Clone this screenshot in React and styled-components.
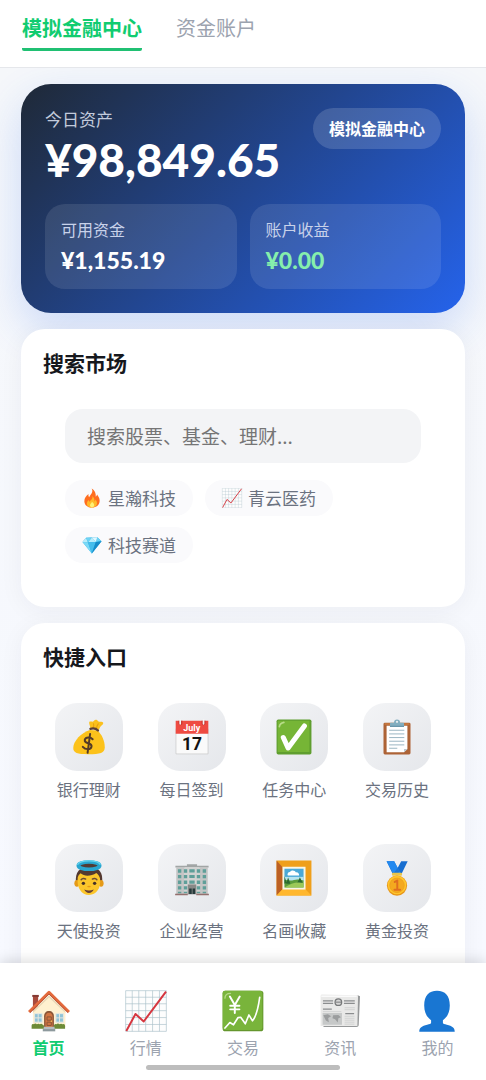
import React, { useState } from 'react';
import styled, { createGlobalStyle, css } from 'styled-components';

const GlobalStyle = createGlobalStyle`
    * {
        box-sizing: border-box;
    }

    body {
        margin: 0;
        background: #f6f8fd;
        font-family: 'Noto Sans CJK SC', 'Noto Sans', sans-serif;
        color: #16181d;
    }

    button, input {
        font-family: inherit;
    }
`;

/* ---------- icons ---------- */

const Fire = () => (
    <svg viewBox="0 0 128 128" aria-hidden="true">
        <path fill="#ff6d1f" d="M62 3c9 17 3 29-8 41-4 5-7 10-8 15-5-5-6-12-4-20C25 50 15 67 15 84c0 24 20 41 48 41 30 0 50-18 50-44 0-16-9-27-16-39-2 7-5 11-9 14C90 34 82 14 62 3z" />
        <path fill="#ffb928" d="M66 51c4 13-3 21-10 27-4 4-6 7-7 10-4-3-6-7-6-11-8 7-12 15-12 23 0 14 13 24 32 24 20 0 33-11 33-27 0-9-4-17-10-24 0 6-2 10-6 13 1-14-3-26-14-35z" />
        <path fill="#fff176" d="M63 88c2 8-12 12-12 22 0 8 6 13 13 13 8 0 14-5 14-13 0-9-7-16-15-22z" />
    </svg>
);

const Chart = () => (
    <svg viewBox="0 0 128 128" aria-hidden="true">
        <rect x="2" y="2" width="124" height="124" fill="#fdfdfd" />
        <path stroke="#a9c0c9" strokeWidth="2" fill="none" d="M2 2h124v124H2zM22 2v124M42 2v124M63 2v124M84 2v124M105 2v124M2 22h124M2 42h124M2 63h124M2 84h124M2 105h124" />
        <path fill="none" stroke="#d6363f" strokeWidth="6" strokeLinejoin="round" d="M4 125 32 73l25 23L125 5" />
    </svg>
);

const Gem = () => (
    <svg viewBox="0 0 128 128" aria-hidden="true">
        <path fill="#29a9e0" d="M3 45 26 18l72-4 27 26-62 78z" />
        <path fill="#b8edfb" d="m3 45 23-27 12 29zM63 16 38 47l50-3z" />
        <path fill="#6cd3f4" d="m26 18 37-2-25 31zM98 14l27 26-37 4z" />
        <path fill="#dff8ff" d="m63 16 35-2-10 30z" />
        <path fill="#7cdaf7" d="m3 45 35 2 25 71z" />
        <path fill="#45bdec" d="m38 47 50-3-25 74z" />
        <path fill="#168bc8" d="m88 44 37-4-62 78z" />
    </svg>
);

const MoneyBag = () => (
    <svg viewBox="0 0 128 128" aria-hidden="true">
        <path fill="#fcc21b" d="M67 39C37 48 8 78 8 103c0 17 14 22 53 22 43 0 59-5 59-25 0-22-10-45-26-59z" />
        <path fill="#fbc01d" d="M69 33c-1-10-6-16-4-23 8-3 12 2 16-3 5-7 12-5 16 1 5 5 12-2 17 4 3 8-8 10-11 18-2 4-4 7-5 11z" />
        <path fill="none" stroke="#e7a00f" strokeWidth="4" strokeLinecap="round" d="M80 17c3 6 0 12-3 17M97 17c-5 5-6 12-6 18" />
        <path fill="none" stroke="#5d4037" strokeWidth="8" strokeLinecap="round" d="M69 35c9-3 21 0 27 6" />
        <g fill="none" stroke="#543b27" strokeWidth="7" strokeLinecap="round">
            <path d="M77 72c-7-8-25-9-28 2-3 17 27 8 24 24-2 12-22 12-31 1" />
            <path d="m68 53-9 67" />
        </g>
    </svg>
);

const Calendar = () => (
    <svg viewBox="0 0 128 128" aria-hidden="true">
        <path fill="#fafafa" stroke="#bdbdbd" strokeWidth="2" d="M7 35h114v89H7z" />
        <path fill="#ee4b42" d="M6 6h116v46H6z" />
        <path fill="#c9352d" d="M16 6h14v9a7 7 0 0 1-14 0zM98 6h14v9a7 7 0 0 1-14 0z" />
        <path stroke="#f5f5f5" strokeWidth="6" strokeLinecap="round" d="M22 3v14M105 3v14" />
        <text x="63" y="41" textAnchor="middle" fontFamily="Roboto" fontWeight="700" fontSize="32" fill="#fff">July</text>
        <text x="64" y="111" textAnchor="middle" fontFamily="Roboto" fontWeight="700" fontSize="62" fill="#111">17</text>
    </svg>
);

const Check = () => (
    <svg viewBox="0 0 128 128" aria-hidden="true">
        <rect x="2" y="2" width="124" height="124" rx="6" fill="#5f9e2f" />
        <path fill="#76b536" d="M6 6h113v111H6z" />
        <path stroke="#b8dc89" strokeWidth="6" strokeLinecap="round" d="M12 27c1-8 6-13 16-15" fill="none" />
        <path fill="none" stroke="#fff" strokeWidth="18" strokeLinecap="round" strokeLinejoin="round" d="m26 66 17 37L101 25" />
    </svg>
);

const Clipboard = () => (
    <svg viewBox="0 0 128 128" aria-hidden="true">
        <rect x="16" y="13" width="96" height="113" rx="5" fill="#ad6336" />
        <path fill="#c8793f" d="M20 15h88v6H20z" />
        <path fill="#fff" d="M27 24h74v83l-12 11H27z" />
        <path fill="#b9c5cc" d="m101 107-12 11v-11z" />
        <path stroke="#8aa8b8" strokeWidth="3" d="M36 40h54M36 53h54M36 66h54M36 79h54M36 92h54M36 104h29" />
        <path fill="#82aebf" d="M39 28V17c0-3 2-4 5-4h9c1-7 4-11 11-11s11 4 11 11h9c3 0 5 1 5 4v11z" />
        <circle cx="64" cy="10" r="4" fill="#e8edf0" />
        <path stroke="#5c8ba0" strokeWidth="3" d="M39 26h50" />
    </svg>
);

const Angel = () => (
    <svg viewBox="0 0 128 128" aria-hidden="true">
        <path fill="#543930" d="M18 80C13 44 31 23 64 23s52 21 46 57z" />
        <ellipse cx="21" cy="83" rx="9" ry="12" fill="#e59a18" />
        <ellipse cx="107" cy="83" rx="9" ry="12" fill="#e59a18" />
        <path fill="#fcc62b" d="M24 61c2-5 5-10 10-14 15 13 38 10 56-1 6 5 11 11 13 19 5 36-13 59-39 59S19 99 24 61z" />
        <path fill="none" stroke="#6d4c36" strokeWidth="5" strokeLinecap="round" d="M36 70c4-5 11-6 16-2M76 68c5-4 12-3 16 2" />
        <circle cx="44" cy="83" r="6" fill="#463129" />
        <circle cx="84" cy="83" r="6" fill="#463129" />
        <path fill="#e59a18" d="M57 94q7-5 14 0-7 6-14 0z" />
        <path fill="#684034" d="M47 105q17 7 34 0-6 12-17 12t-17-12z" />
        <ellipse cx="64" cy="20" rx="38" ry="13" fill="#513b35" stroke="#29a6d0" strokeWidth="13" />
        <path fill="none" stroke="#64d3ed" strokeWidth="5" d="M23 17c5-11 23-14 41-14s35 4 41 13" />
    </svg>
);

const Office = () => (
    <svg viewBox="0 0 128 128" aria-hidden="true">
        <path fill="#a1a5a5" d="M46 15h36v9H46zM5 20h118v7H5z" />
        <path fill="#c4c5c5" d="M8 25h30v96H8zM90 25h30v96H90z" />
        <path fill="#d2d2d1" d="M38 25h52v96H38z" />
        <path stroke="#5f9f99" strokeWidth="12" strokeDasharray="12 8" d="M20 33v85M41 33v85M87 33v85M108 33v85" />
        <path stroke="#5f9f99" strokeWidth="19" strokeDasharray="11 9" d="M64 33v51" />
        <path fill="#888987" d="M49 87h30v35H49z" />
        <path fill="#263b3c" d="M54 101h9v20h-9zM66 101h9v20h-9z" />
        <path fill="#94706e" d="M4 120h45v5H4zM79 120h45v5H79z" />
    </svg>
);

const Painting = () => (
    <svg viewBox="0 0 128 128" aria-hidden="true">
        <path fill="#ef9f1b" d="M2 2h124v124H2z" />
        <path fill="#bc6024" d="m2 2 22 25v76L2 126z" />
        <path fill="#ffb72e" d="m2 126 22-23h80l22 23z" />
        <path fill="#f8f6e7" d="M23 24h82v81H23z" />
        <path fill="#4ba9d8" d="M30 31h68v44H30z" />
        <path fill="#b5e3f0" d="M30 60h68v20H30z" />
        <path fill="#5a9c3b" d="M30 70q20 5 34 1t34 2v25H30z" />
        <path fill="#2c6930" d="m30 58 8 23-8 3zM43 62l8 22H36zM85 61l10 22H75z" />
        <path fill="#fff" d="M42 55a8 8 0 0 1 7-12c5-9 19-7 22 1 7-1 12 4 11 11z" />
        <path fill="#9bc958" d="M30 98q35-25 68-16v16z" />
    </svg>
);

const Medal = () => (
    <svg viewBox="0 0 128 128" aria-hidden="true">
        <path fill="#176ed0" d="M27 4h27l12 24L79 4h23L80 50H49z" />
        <path fill="#2389ef" d="M27 4h27l24 45H50z" />
        <path fill="#1557ae" d="m66 28 7 13-8 9H50z" opacity=".4" />
        <rect x="46" y="45" width="36" height="11" rx="4" fill="#eac54a" />
        <circle cx="64" cy="91" r="36" fill="#e79619" />
        <circle cx="64" cy="89" r="33" fill="#ffc52c" />
        <circle cx="64" cy="90" r="26" fill="#f4a91f" stroke="#e8971c" strokeWidth="2" />
        <path fill="none" stroke="#df6f20" strokeWidth="7" strokeLinecap="round" strokeLinejoin="round" d="m56 78 9-5v32M55 106h20" />
    </svg>
);

const House = () => (
    <svg viewBox="0 0 128 128" aria-hidden="true">
        <path fill="#a74a3c" d="M15 18h16v46H15z" />
        <path fill="#853a33" d="M13 15h20v6H13z" />
        <path fill="#fff1d0" d="m64 18 50 48v47H15V65z" />
        <path fill="#ead9b8" d="M64 23 15 70v-7l49-48 50 48v7z" />
        <path fill="none" stroke="#e46b3d" strokeWidth="9" strokeLinejoin="round" d="M3 67 64 7l61 60" />
        <path fill="none" stroke="#b84f34" strokeWidth="3" d="m6 69 58-57 58 57" />
        <path fill="#8b5637" d="M49 114V80c0-10 6-16 15-16s15 6 15 16v34z" />
        <path fill="#d17542" d="M53 114V82c0-8 4-13 11-13s11 5 11 13v32z" />
        <path fill="none" stroke="#8b5637" strokeWidth="3" d="M58 82h13v10H58zM58 98h13v10H58z" />
        <circle cx="71" cy="95" r="2" fill="#ffda65" />
        <path fill="#8fc3d6" stroke="#e7e8e1" strokeWidth="3" d="M20 72h23v26H20zM85 72h23v26H85z" />
        <path stroke="#e7e8e1" strokeWidth="3" d="M31 72v26M20 85h23M96 72v26M85 85h23" />
        <path fill="#6d8b37" d="M11 108q0-5 7-4 4-4 9 0 5-3 9 0 5-3 8 1 5 1 5 6v7H11zM79 108q2-5 8-4 4-4 9 0 5-3 9 0 8-2 8 5v9H79z" />
        <path fill="#b8bec0" d="M48 112h33v7H48z" />
        <path fill="#8d999d" d="M45 119h38v7H45z" />
    </svg>
);

const YenChart = () => (
    <svg viewBox="0 0 128 128" aria-hidden="true">
        <rect x="2" y="2" width="124" height="124" rx="8" fill="#64962d" />
        <rect x="2" y="2" width="121" height="120" rx="7" fill="#79b43b" />
        <path stroke="#b5d987" strokeWidth="4" strokeLinecap="round" fill="none" d="M9 25c0-10 7-15 17-15" />
        <g fill="none" stroke="#fff" strokeLinecap="round" strokeLinejoin="round">
            <path strokeWidth="6" d="m24 20 15 26 15-26M39 46v24M25 48h28M25 59h28" />
            <path strokeWidth="5" d="m9 116 15-17 11 7 14-22 8-1 14 20 11-27 11 18C107 77 111 52 115 22" />
        </g>
    </svg>
);

const Newspaper = () => (
    <svg viewBox="0 0 128 128" aria-hidden="true">
        <path fill="#969899" d="m118 16 7 3-4 88c0 4-3 6-7 6H12z" />
        <path fill="#e9e9e8" d="M5 18q0-4 4-4l110 2-2 94H5z" />
        <path stroke="#fafafa" strokeWidth="4" d="M7 19h108" />
        <path stroke="#8b8d8e" strokeWidth="4" d="M12 33h31M76 33h33M12 41h31M76 41h33" />
        <circle cx="59" cy="37" r="10" fill="#d6d6d5" stroke="#77797a" strokeWidth="4" />
        <path stroke="#77797a" strokeWidth="3" d="M51 37h17" />
        <path stroke="#8b8d8e" strokeWidth="4" d="M12 58h27M80 72h27" />
        <path stroke="#c4c6c6" strokeWidth="2" d="M12 66h56M12 72h56M78 54h31M78 60h31M78 80h30M78 86h30M78 92h30M78 98h30M78 104h30" />
        <path fill="#c6c8c8" d="M11 70h59v36H11z" />
        <path fill="#9b9d9e" d="m13 77 14-3 10 6-9 5 2 13-9-5zM43 77l16-1 8 7-8 3-2 13-8-10-8-3z" />
    </svg>
);

const Person = () => (
    <svg viewBox="0 0 128 128" aria-hidden="true">
        <path fill="#1976d2" d="M64 2c25 0 39 15 39 45 0 22-9 37-21 45v8c0 4 5 4 12 6 16 4 24 9 24 21H10c0-12 8-17 24-21 7-2 12-2 12-6v-8C34 84 25 69 25 47 25 17 39 2 64 2z" />
    </svg>
);

/* ---------- data ---------- */

const tabs = ['模拟金融中心', '资金账户'];

const hotTags = [
    { icon: Fire, label: '星瀚科技' },
    { icon: Chart, label: '青云医药' },
    { icon: Gem, label: '科技赛道' },
];

const shortcuts = [
    { icon: MoneyBag, label: '银行理财' },
    { icon: Calendar, label: '每日签到' },
    { icon: Check, label: '任务中心' },
    { icon: Clipboard, label: '交易历史' },
    { icon: Angel, label: '天使投资' },
    { icon: Office, label: '企业经营' },
    { icon: Painting, label: '名画收藏' },
    { icon: Medal, label: '黄金投资' },
];

const navItems = [
    { icon: House, label: '首页' },
    { icon: Chart, label: '行情' },
    { icon: YenChart, label: '交易' },
    { icon: Newspaper, label: '资讯' },
    { icon: Person, label: '我的' },
];

const App = () => {

    const [tab, setTab] = useState(0);
    const [page, setPage] = useState(0);
    const [keyword, setKeyword] = useState('');

    return (
        <>
            <GlobalStyle />
            <Screen>
                <Header>
                    {tabs.map((label, index) => (
                        <Tab key={label} $active={index === tab} onClick={() => setTab(index)}>
                            {label}
                        </Tab>
                    ))}
                </Header>

                <Content>
                    <AssetCard>
                        <AssetTop>
                            <div>
                                <AssetLabel>今日资产</AssetLabel>
                                <AssetAmount>¥98,849.65</AssetAmount>
                            </div>
                            <CenterButton>模拟金融中心</CenterButton>
                        </AssetTop>
                        <Stats>
                            <Stat>
                                <StatLabel>可用资金</StatLabel>
                                <StatValue>¥1,155.19</StatValue>
                            </Stat>
                            <Stat>
                                <StatLabel>账户收益</StatLabel>
                                <StatValue $gain>¥0.00</StatValue>
                            </Stat>
                        </Stats>
                    </AssetCard>

                    <Panel>
                        <PanelTitle>搜索市场</PanelTitle>
                        <SearchArea>
                            <SearchInput
                                type='text'
                                aria-label='搜索市场'
                                placeholder='搜索股票、基金、理财...'
                                value={keyword}
                                onChange={e => setKeyword(e.target.value)}
                            />
                            <Tags>
                                {hotTags.map(({ icon: Icon, label }) => (
                                    <Tag key={label} onClick={() => setKeyword(label)}>
                                        <Icon />
                                        {label}
                                    </Tag>
                                ))}
                            </Tags>
                        </SearchArea>
                    </Panel>

                    <Panel>
                        <PanelTitle>快捷入口</PanelTitle>
                        <Shortcuts>
                            {shortcuts.map(({ icon: Icon, label }) => (
                                <Shortcut key={label}>
                                    <ShortcutIcon><Icon /></ShortcutIcon>
                                    {label}
                                </Shortcut>
                            ))}
                        </Shortcuts>
                    </Panel>
                </Content>

                <BottomNav>
                    {navItems.map(({ icon: Icon, label }, index) => (
                        <NavItem
                            key={label}
                            href='#'
                            $active={index === page}
                            onClick={e => { e.preventDefault(); setPage(index) }}
                        >
                            <Icon />
                            {label}
                        </NavItem>
                    ))}
                    <HomeIndicator />
                </BottomNav>
            </Screen>
        </>
    )
}

const plainButton = css`
    border: 0;
    padding: 0;
    background: none;
    cursor: pointer;
`

const Screen = styled.div`
    display: flex;
    flex-direction: column;
    height: 100vh;
    overflow: hidden;
`

const Header = styled.header`
    flex: none;
    display: flex;
    align-items: flex-start;
    gap: 34px;
    padding: 12px 22px 16px;
    background: #fff;
    border-bottom: 1px solid #e5e7eb;
`

const Tab = styled.button`
    ${plainButton}
    padding-bottom: 4px;
    border-bottom: 3px solid ${({ $active }) => ($active ? '#20c073' : 'transparent')};
    border-radius: 2px;
    font-size: 20px;
    line-height: 32px;
    font-weight: ${({ $active }) => ($active ? 700 : 400)};
    color: ${({ $active }) => ($active ? '#10cc70' : '#9ca3af')};
`

const Content = styled.main`
    flex: 1;
    min-height: 0;
    display: flex;
    flex-direction: column;
    gap: 16px;
    padding: 16px 21px;
    overflow-y: auto;
    scrollbar-width: none;
    background: linear-gradient(180deg, #f5f7fa 0%, #f7f9ff 100%);

    > * {
        flex: none;
    }
`

const AssetCard = styled.section`
    padding: 24px;
    border-radius: 30px;
    background: linear-gradient(135deg, #1f2937 0%, #2563eb 100%);
    box-shadow: 0 16px 44px rgba(37, 99, 235, 0.2);
    color: #fff;
`

const AssetTop = styled.div`
    display: flex;
    justify-content: space-between;
    align-items: flex-start;
`

const AssetLabel = styled.div`
    font-size: 17px;
    line-height: 22px;
    color: #c3cbdc;
`

const AssetAmount = styled.div`
    font-family: Lato, 'Noto Sans', sans-serif;
    font-size: 46px;
    line-height: 60px;
    font-weight: 900;
`

const CenterButton = styled.button`
    ${plainButton}
    padding: 8px 16px;
    border-radius: 21px;
    background: rgba(255, 255, 255, 0.15);
    font-size: 16px;
    line-height: 25px;
    font-weight: 700;
    color: #fff;
`

const Stats = styled.div`
    display: grid;
    grid-template-columns: 1fr 1fr;
    gap: 13px;
    margin-top: 14px;
`

const Stat = styled.div`
    padding: 14px 16px 12px;
    border-radius: 20px;
    background: rgba(255, 255, 255, 0.1);
`

const StatLabel = styled.div`
    font-size: 16px;
    line-height: 22px;
    color: #c8d2ea;
`

const StatValue = styled.div`
    margin-top: 4px;
    font-family: Lato, 'Noto Sans', sans-serif;
    font-size: 23px;
    line-height: 33px;
    font-weight: 900;
    color: ${({ $gain }) => ($gain ? '#86efac' : '#fff')};
`

const Panel = styled.section`
    padding: 22px;
    border-radius: 24px;
    background: #fff;
    box-shadow: 0 4px 24px rgba(30, 41, 59, 0.05);
`

const PanelTitle = styled.h2`
    margin: 0;
    font-size: 21px;
    line-height: 22px;
    font-weight: 700;
`

const SearchArea = styled.div`
    margin-top: 14px;
    padding: 22px;
`

const SearchInput = styled.input`
    display: block;
    width: 100%;
    height: 54px;
    padding: 0 22px 2px;
    border: 0;
    border-radius: 18px;
    outline: none;
    background: #f3f4f6;
    font-size: 19px;
    color: #16181d;

    &::placeholder {
        color: #757575;
        opacity: 1;
    }
`

const Tags = styled.div`
    display: flex;
    flex-wrap: wrap;
    gap: 11px 12px;
    margin-top: 17px;
`

const Tag = styled.button`
    ${plainButton}
    display: flex;
    align-items: center;
    gap: 5px;
    padding: 5px 17px 5px 16px;
    border-radius: 18px;
    background: #fafafc;
    font-size: 17px;
    line-height: 26px;
    color: #6b7280;

    svg {
        width: 22px;
        height: 20px;
    }
`

const Shortcuts = styled.div`
    display: grid;
    grid-template-columns: repeat(4, 1fr);
    gap: 11px;
    margin-top: 20px;
    padding-bottom: 22px;
`

const Shortcut = styled.button`
    ${plainButton}
    display: flex;
    flex-direction: column;
    align-items: center;
    gap: 6px;
    padding: 16px 0;
    font-size: 16px;
    line-height: 24px;
    color: #6b7280;
`

const ShortcutIcon = styled.span`
    display: flex;
    align-items: center;
    justify-content: center;
    width: 68px;
    height: 68px;
    border-radius: 22px;
    background: linear-gradient(135deg, #f3f4f6 0%, #e5e7eb 100%);

    svg {
        width: 36px;
        height: 36px;
    }
`

const BottomNav = styled.nav`
    flex: none;
    position: relative;
    z-index: 1;
    display: grid;
    grid-template-columns: repeat(5, 1fr);
    padding: 27px 0 21px;
    background: #fff;
    box-shadow: 0 -3px 12px rgba(0, 0, 0, 0.13);
`

const NavItem = styled.a`
    display: flex;
    flex-direction: column;
    align-items: center;
    gap: 3px;
    font-size: 16px;
    line-height: 24px;
    text-decoration: none;
    font-weight: ${({ $active }) => ($active ? 700 : 400)};
    color: ${({ $active }) => ($active ? '#10cc70' : '#9ca3af')};

    svg {
        width: 42px;
        height: 42px;
    }
`

const HomeIndicator = styled.div`
    position: absolute;
    bottom: 10px;
    left: 30%;
    width: 40%;
    height: 5px;
    border-radius: 3px;
    background: #bdbdbd;
`

export default App
